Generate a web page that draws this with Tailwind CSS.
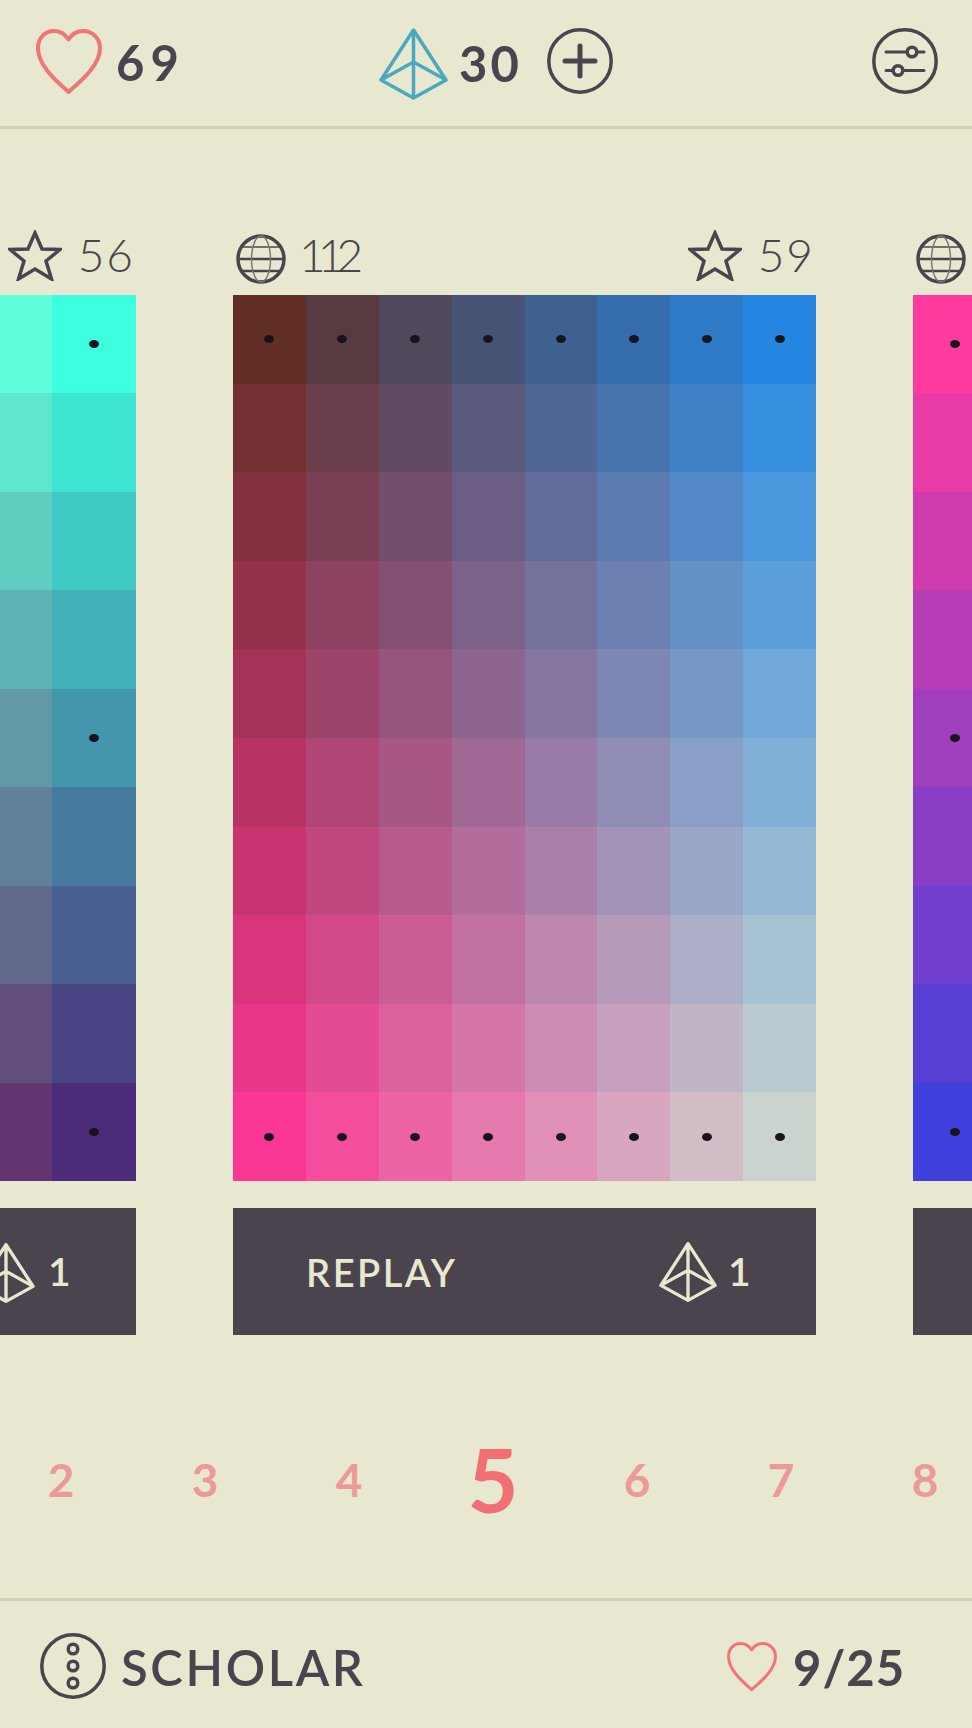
<!doctype html>
<html>
<head>
<meta charset="utf-8">
<script src="https://cdn.jsdelivr.net/npm/@tailwindcss/browser@4"></script>
</head>
<body class="m-0">
<div class="w-[972px] h-[1728px] overflow-hidden flex flex-col bg-[#e8e8d0] text-[#4b444e] font-['Lato','Liberation_Sans',sans-serif]">

  <!-- top bar -->
  <header class="h-[129px] shrink-0 flex items-start pt-[28px] pl-[36px] border-b-[3px] border-[#d1d0b0]">
    <div class="w-[343px] flex items-center gap-[14px] h-[67px]">
      <svg class="w-[66px] h-[66px]" viewBox="0 0 66 66" fill="none" stroke="#ef7676" stroke-width="4" stroke-linejoin="round"><path d="M32.5 63C24 55 2 38 2 19C2 9 9 2 18 2C24 2 29 5 32.5 10.500C36 5 41 2 47 2C56 2 64 9 64 19C64 38 41 55 32.5 63Z"/></svg>
      <span class="text-[49px] leading-[67px] font-bold tracking-[6px] mt-[2px]">69</span>
    </div>
    <div class="w-[493px] flex items-start h-[72px]">
      <svg class="w-[69px] h-[72px]" viewBox="0 0 69 72" fill="none" stroke="#4aa8bf" stroke-width="3.500" stroke-linejoin="round"><path d="M34.500 2L2 52L34.500 70L67 52ZM34.500 2V70M2 52L34.500 34L67 52"/></svg>
      <span class="ml-[11px] text-[49px] leading-[67px] font-bold tracking-[3px] mt-[2px]">30</span>
      <svg class="ml-[25px] w-[66px] h-[66px]" viewBox="0 0 66 66" fill="none" stroke="#4b444e"><circle cx="33" cy="33" r="31.200" stroke-width="3.500"/><path d="M18 33H48M33 18V48" stroke-width="5" stroke-linecap="round"/></svg>
    </div>
    <svg class="w-[66px] h-[66px]" viewBox="0 0 66 66" fill="none" stroke="#4b444e"><circle cx="33" cy="33" r="31.200" stroke-width="3.500"/><path d="M14 24H52M14 42.500H52" stroke-width="3" stroke-linecap="round"/><circle cx="40" cy="24" r="4.800" stroke-width="3.500" fill="#e8e8d0"/><circle cx="26" cy="42.500" r="4.800" stroke-width="3.500" fill="#e8e8d0"/></svg>
  </header>

  <!-- cards -->
  <main class="flex gap-[97px] mt-[100px] shrink-0 h-[1106px]">
    <!-- left -->
    <section class="w-[136px] shrink-0 flex flex-col">
      <div class="h-[66px] flex items-start justify-end gap-[16px] pr-[1px]">
        <svg class="w-[54px] h-[51px] mt-[1px]" viewBox="0 0 54 51" fill="none" stroke="#4b444e" stroke-width="3.500" stroke-linejoin="miter"><path d="M27 3L34 19L52 19.500L38 31L43.500 49L27 39L10.500 49L16 31L2 19.500L20 19Z"/></svg>
        <span class="text-[46px] leading-[52px] font-light tracking-[2px]">56</span>
      </div>
      <div id="left" class="h-[886px] grid grid-cols-[52px_84px] grid-rows-9"></div>
      <div class="mt-[27px] h-[127px] bg-[#4b444e] text-[#e8e8d0] flex items-center relative overflow-hidden">
        <svg class="absolute left-[-23px] top-[35px] w-[58px] h-[60px]" viewBox="0 0 69 72" fill="none" stroke="#e8e8d0" stroke-width="4" stroke-linejoin="round"><path d="M34.500 2L2 52L34.500 70L67 52ZM34.500 2V70M2 52L34.500 34L67 52"/></svg>
        <span class="ml-[48px] text-[39px] font-semibold leading-none">1</span>
      </div>
    </section>
    <!-- centre -->
    <section class="w-[583px] shrink-0 flex flex-col">
      <div class="h-[66px] flex items-start pr-[1px]">
        <svg class="w-[50px] h-[50px] mt-[5px] ml-[3px]" viewBox="0 0 50 50" fill="none" stroke="#4b444e"><circle cx="25" cy="25" r="23" stroke-width="3.500"/><path d="M3 25H47M6 37H44" stroke-width="2.500"/><path d="M7 13H43" stroke-width="1.500"/><ellipse cx="25" cy="25" rx="9.500" ry="23" stroke-width="1.500" stroke="#7b7679"/></svg>
        <span class="ml-[13px] text-[46px] leading-[52px] font-light"><span class="tracking-[-8px]">11</span>2</span>
        <svg class="ml-auto w-[54px] h-[51px] mt-[1px]" viewBox="0 0 54 51" fill="none" stroke="#4b444e" stroke-width="3.500"><path d="M27 3L34 19L52 19.500L38 31L43.500 49L27 39L10.500 49L16 31L2 19.500L20 19Z"/></svg>
        <span class="ml-[16px] text-[46px] leading-[52px] font-light tracking-[2px]">59</span>
      </div>
      <div id="center" class="h-[886px] grid grid-cols-8 grid-rows-10"></div>
      <div class="mt-[27px] h-[127px] bg-[#4b444e] text-[#e8e8d0] flex items-center">
        <span class="ml-[73px] w-[353px] text-[38px] font-semibold tracking-[2.500px] leading-none">REPLAY</span>
        <svg class="w-[58px] h-[60px]" viewBox="0 0 69 72" fill="none" stroke="#e8e8d0" stroke-width="4" stroke-linejoin="round"><path d="M34.500 2L2 52L34.500 70L67 52ZM34.500 2V70M2 52L34.500 34L67 52"/></svg>
        <span class="ml-[11px] text-[39px] font-semibold leading-none">1</span>
      </div>
    </section>
    <!-- right -->
    <section class="w-[84px] shrink-0 flex flex-col">
      <div class="h-[66px] flex items-start">
        <svg class="w-[50px] h-[50px] mt-[5px] ml-[3px]" viewBox="0 0 50 50" fill="none" stroke="#4b444e"><circle cx="25" cy="25" r="23" stroke-width="3.500"/><path d="M3 25H47M6 37H44" stroke-width="2.500"/><path d="M7 13H43" stroke-width="1.500"/><ellipse cx="25" cy="25" rx="9.500" ry="23" stroke-width="1.500" stroke="#7b7679"/></svg>
      </div>
      <div id="right" class="h-[886px] grid grid-cols-1 grid-rows-9"></div>
      <div class="mt-[27px] h-[127px] bg-[#4b444e]"></div>
    </section>
  </main>

  <!-- pager -->
  <nav class="flex items-center w-[1008px] ml-[-11px] h-[263px] pt-[25px] shrink-0 text-[#ec9a97] font-bold text-[46px]">
    <span class="w-[144px] shrink-0 text-center">2</span>
    <span class="w-[144px] shrink-0 text-center">3</span>
    <span class="w-[144px] shrink-0 text-center">4</span>
    <span class="w-[144px] shrink-0 text-center text-[#f26f74] text-[88px] font-bold">5</span>
    <span class="w-[144px] shrink-0 text-center">6</span>
    <span class="w-[144px] shrink-0 text-center">7</span>
    <span class="w-[144px] shrink-0 text-center">8</span>
  </nav>

  <!-- bottom bar -->
  <footer class="border-t-[3px] border-[#cfcfb3] flex-1 flex items-center pl-[40px] pt-[3px]">
    <svg class="w-[66px] h-[66px]" viewBox="0 0 66 66" fill="none" stroke="#4b444e"><circle cx="33" cy="33" r="31.200" stroke-width="3.500"/><circle cx="33" cy="16" r="4.800" stroke-width="3.500"/><circle cx="33" cy="33" r="4.800" stroke-width="3.500"/><circle cx="33" cy="50" r="4.800" stroke-width="3.500"/></svg>
    <span class="ml-[15px] w-[606px] text-[49px] font-semibold tracking-[2.600px] leading-none mt-[2px]">SCHOLAR</span>
    <svg class="w-[50px] h-[50px] mt-[1px]" viewBox="0 0 66 66" fill="none" stroke="#ef7676" stroke-width="4" stroke-linejoin="round"><path d="M32.500 63C24 55 2 38 2 19C2 9 9 2 18 2C24 2 29 5 32.500 10.500C36 5 41 2 47 2C56 2 64 9 64 19C64 38 41 55 32.500 63Z"/></svg>
    <span class="ml-[16px] text-[49px] font-bold tracking-[1px] leading-none mt-[2px]">9/25</span>
  </footer>
</div>

<script>
  function mix(a, b, t) {
    return a.map(function (v, i) { return Math.round(v + (b[i] - v) * t); });
  }
  function fill(id, cols, rows, tl, tr, bl, br, dotCols, dotRows) {
    var host = document.getElementById(id);
    for (var r = 0; r < rows; r++) {
      var t = r / (rows - 1);
      var a = mix(tl, bl, t), b = mix(tr, br, t);
      for (var c = 0; c < cols; c++) {
        var col = cols > 1 ? mix(a, b, c / (cols - 1)) : a;
        var cell = document.createElement('div');
        cell.className = 'flex items-center justify-center';
        cell.style.backgroundColor = 'rgb(' + col.join(',') + ')';
        if (dotCols.indexOf(c) >= 0 && dotRows.indexOf(r) >= 0) {
          var dot = document.createElement('span');
          dot.className = 'w-[10px] h-[8px] rounded-[50%] bg-[#17141c]';
          cell.appendChild(dot);
        }
        host.appendChild(cell);
      }
    }
  }
  fill('center', 8, 10, [97,47,38], [37,134,225], [251,55,150], [203,211,207], [0,1,2,3,4,5,6,7], [0,9]);
  fill('left', 2, 9, [95,255,220], [60,255,224], [98,53,112], [76,44,120], [1], [0,4,8]);
  fill('right', 1, 9, [255,59,159], [255,59,159], [64,64,220], [64,64,220], [0], [0,4,8]);
</script>
</body>
</html>
